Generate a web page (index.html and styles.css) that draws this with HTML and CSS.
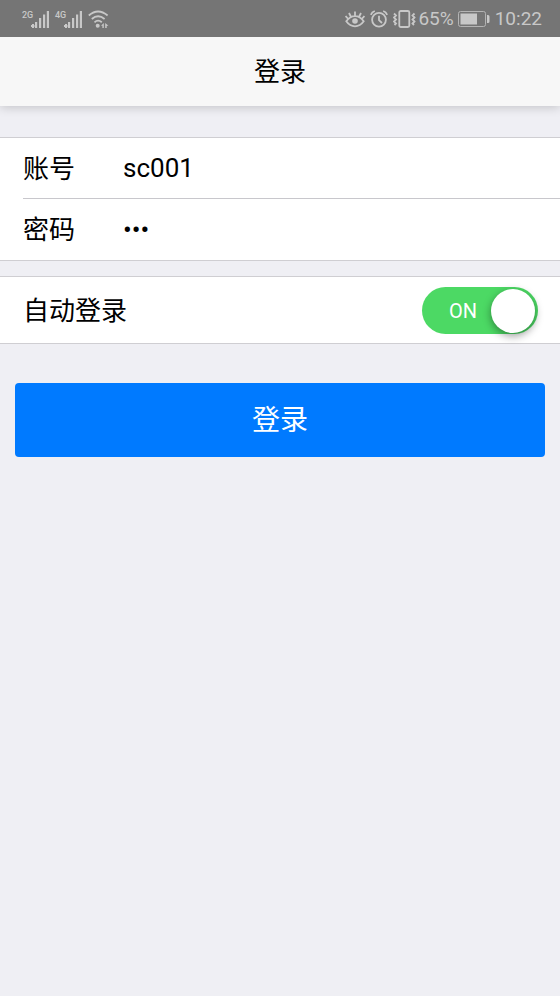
FILE: index.html
```html
<!DOCTYPE html>
<html lang="zh-CN">
<head>
  <meta charset="utf-8">
  <meta name="viewport" content="width=device-width, initial-scale=1">
  <title>登录</title>
  <link rel="stylesheet" href="styles.css">
</head>
<body>
  <div class="status-bar">
    <div class="status-group status-left">
      <div class="signal">
        <span class="network">2G</span>
        <svg width="18" height="18" viewBox="0 0 18 18" aria-hidden="true"><path d="M0 15h1v-1h2v1h.5v2H3v1H1v-1H0zM4 12h2.200v6H4zM8 8h2.200v10H8zM12 4.500h2.200V18H12zM15.800 1H18v17h-2.200z"/></svg>
      </div>
      <div class="signal">
        <span class="network">4G</span>
        <svg width="18" height="18" viewBox="0 0 18 18" aria-hidden="true"><path d="M0 15h1v-1h2v1h.5v2H3v1H1v-1H0zM4 12h2.200v6H4zM8 8h2.200v10H8zM12 4.500h2.200V18H12zM15.800 1H18v17h-2.200z"/></svg>
      </div>
      <svg class="wifi" width="22" height="18" viewBox="0 0 22 18" aria-hidden="true">
        <path class="line" d="M.8 5.500Q10 -2.500 19.600 5.500M3.800 9Q10 3.600 16.600 9M6.500 12.300Q10 9 13.800 12.300"/>
        <circle cx="9.700" cy="15.700" r="2"/>
        <path d="M13 15.800l2.800-2.800v5h-1.400v-2.200zM17.200 13l3.300 2.800h-1.800V18h-1.500z"/>
      </svg>
    </div>
    <div class="status-group status-right">
      <svg width="20" height="18" viewBox="0 0 20 18" aria-hidden="true">
        <path class="line" d="M1.300 11.300C6 4.300 14 4.300 18.700 11.300C14 18 6 18 1.300 11.300zM10 5.500V1.500M5.800 6.500L4 3M14.200 6.500L16 3M2.800 8.500L.6 6M17.200 8.500L19.400 6"/>
        <circle cx="10" cy="11" r="2.800"/>
      </svg>
      <svg class="alarm" width="18" height="18" viewBox="0 0 18 18" aria-hidden="true">
        <circle class="line" cx="9" cy="9.800" r="6.900"/>
        <path class="line" d="M9 5.800v4.400l3 2.800M.8 4.800Q2 2 4.800 1M17.200 4.800Q16 2 13.200 1"/>
      </svg>
      <svg class="vibrate" width="23" height="18" viewBox="0 0 23 18" aria-hidden="true">
        <rect class="line" x="6.300" y="1" width="10" height="16" rx="1.500"/>
        <path class="line" d="M1 3.500l2 2-2 2 2 2-2 2 2 2-1.500 1.500M21.500 3.500l-2 2 2 2-2 2 2 2-2 2 1.500 1.500"/>
      </svg>
      <span class="percent">65%</span>
      <svg class="battery" width="32" height="16" viewBox="0 0 32 16" aria-hidden="true">
        <rect class="outline" x=".5" y=".5" width="27" height="15" rx="2"/>
        <path d="M2.500 2.500H19v11H2.500zM29 4h1q1.500 0 1.500 1.500v5q0 1.500-1.500 1.500h-1z"/>
      </svg>
      <time>10:22</time>
    </div>
  </div>
  <header class="title-bar"><h1>登录</h1></header>
  <main>
    <form class="login">
      <div class="card">
        <div class="row">
          <label for="account">账号</label>
          <input class="field" id="account" type="text" value="sc001">
        </div>
        <div class="row">
          <label for="password">密码</label>
          <input class="field" id="password" type="password" value="123">
        </div>
      </div>
      <div class="card">
        <div class="row row-toggle">
          <label for="auto-login">自动登录</label>
          <span class="switch">
            <input id="auto-login" type="checkbox" role="switch" checked>
            <span class="switch-text" aria-hidden="true">ON</span>
          </span>
        </div>
      </div>
      <button class="submit" type="button">登录</button>
    </form>
  </main>
</body>
</html>
```
FILE: styles.css
```css
* {
  box-sizing: border-box;
}

body {
  margin: 0;
  background: #efeff4;
  color: #000;
  font-family: Roboto, "Noto Sans CJK SC", sans-serif;
  font-size: 26px;
}

.status-bar {
  position: relative;
  z-index: 1;
  display: flex;
  justify-content: space-between;
  height: 37px;
  padding: 0 18px 0 22px;
  background: #757575;
  color: #c8c8c8;
  font-size: 19px;
}

.status-group,
.signal {
  display: flex;
  align-items: center;
}

.status-bar svg {
  flex: none;
  fill: #c8c8c8;
}

.status-bar .line {
  fill: none;
  stroke: #c8c8c8;
  stroke-width: 1.8;
}

.status-bar .outline {
  fill: none;
  stroke: #b4b4b4;
}

.status-left {
  gap: 6px;
}

.signal svg {
  margin-left: -1px;
}

.network {
  width: 10px;
  padding-bottom: 8px;
  font-size: 9px;
  font-weight: 500;
  line-height: 10px;
}

.alarm,
.vibrate {
  margin-left: 5px;
}

.percent {
  margin-left: 2px;
}

.battery {
  margin: 0 5px 0 4px;
}

.title-bar {
  position: relative;
  display: flex;
  align-items: center;
  justify-content: center;
  height: 69px;
  background: #f7f7f7;
  box-shadow: 0 1px 10px rgba(0, 0, 0, 0.2);
}

.title-bar h1 {
  margin: 0;
  padding-bottom: 4px;
  font-size: 26px;
  font-weight: 400;
}

.login {
  display: flex;
  flex-direction: column;
  gap: 15px;
  padding-top: 31px;
}

.card {
  border: solid #cfced2;
  border-width: 1px 0;
  background: #fff;
}

.row {
  display: flex;
  align-items: center;
  height: 60px;
  margin-left: 23px;
}

.row + .row {
  height: 62px;
  border-top: 1px solid #c8c7cc;
}

.row label {
  width: 100px;
  padding-bottom: 4px;
}

.field {
  flex: 1;
  min-width: 0;
  padding: 0;
  border: 0;
  outline: 0;
  background: none;
  color: inherit;
  font: inherit;
}

.row-toggle {
  justify-content: space-between;
  height: 66px;
  padding-right: 22px;
}

.row.row-toggle label {
  width: auto;
}

.switch {
  position: relative;
  width: 116px;
  height: 47px;
}

.switch input {
  display: block;
  width: 100%;
  height: 100%;
  margin: 0;
  border-radius: 24px;
  background: #4cd964;
  appearance: none;
}

.switch input::before {
  content: "";
  position: absolute;
  top: 2px;
  right: 3px;
  width: 44px;
  height: 44px;
  border-radius: 50%;
  background: #fff;
  box-shadow: 0 3px 8px rgba(0, 0, 0, 0.4);
}

.switch input:not(:checked) {
  background: #ddd;
}

.switch input:not(:checked)::before {
  right: auto;
  left: 3px;
}

.switch-text {
  position: absolute;
  top: 12px;
  left: 27px;
  color: #fff;
  font-size: 20px;
  line-height: 24px;
  pointer-events: none;
}

.submit {
  height: 74px;
  margin: 24px 15px;
  padding: 0 0 4px;
  border: 0;
  border-radius: 4px;
  background: #007aff;
  color: #fff;
  font: inherit;
  font-size: 28px;
}
```
